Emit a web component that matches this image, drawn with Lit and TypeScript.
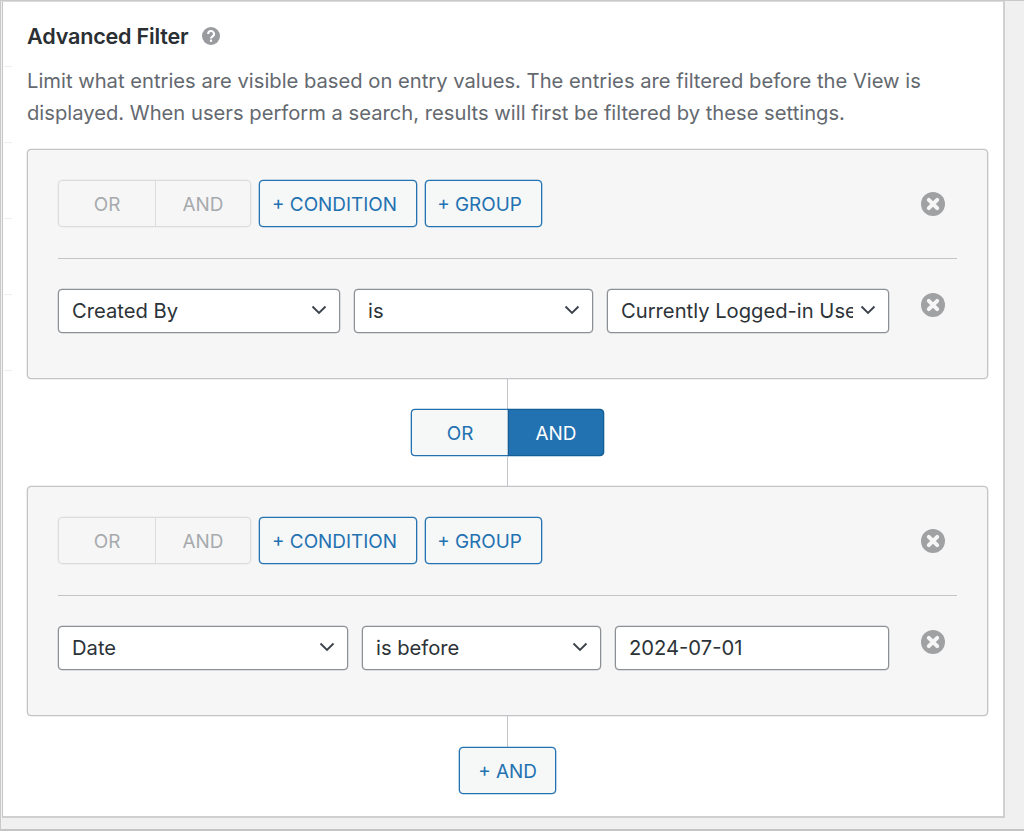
import { LitElement, html, css } from "lit";
import { customElement } from "lit/decorators.js";

const closeIcon = html`<svg class="x" viewBox="0 0 24 24" width="24" height="24" aria-hidden="true">
  <circle cx="12" cy="12" r="12" fill="#a0a1a3"></circle>
  <path d="M7.8 7.8 16.2 16.2M16.2 7.8 7.8 16.2" stroke="#f6f6f7" stroke-width="4" stroke-linecap="round"></path>
</svg>`;

const chevron = html`<svg class="chev" viewBox="0 0 16 10" width="16" height="10" aria-hidden="true">
  <path d="M1.5 1.5 8 8 14.5 1.5" fill="none" stroke="#3c434a" stroke-width="1.9"></path>
</svg>`;

@customElement("app-root")
export class AppRoot extends LitElement {
  static styles = css`
    :host {
      display: block;
      width: 1024px;
      height: 831px;
      box-sizing: border-box;
      background: #f0f0f1;
      border-top: 1px solid #c9c9c9;
      border-left: 1px solid #c9c9c9;
      border-bottom: 2px solid #c4c4c4;
      font-family: Inter, "Liberation Sans", sans-serif;
      color: #2c3338;
      overflow: hidden;
      position: relative;
    }
    .panel {
      box-sizing: border-box;
      width: 1003px;
      height: 817px;
      margin-left: 1px;
      padding: 1px 16px 0 24px;
      background: #fff;
      border-left: 1px solid #c6c6c6;
      border-right: 2px solid #d0d0d0;
      border-bottom: 2px solid #cfcfcf;
      border-top: 1px solid #dcdcdc;
    }
    .tick {
      position: absolute;
      left: 3px;
      width: 8px;
      height: 1px;
      background: #eeeeee;
    }
    .title {
      display: flex;
      align-items: center;
      gap: 14px;
      height: 30px;
      margin-top: 18px;
      font-size: 21.6px;
      font-weight: 600;
      letter-spacing: -0.2px;
      color: #2a2f33;
    }
    .help { margin-top: -1px; }
    .desc {
      margin: 14px 0 0;
      font-size: 20.2px;
      line-height: 32px;
      color: #646970;
      white-space: nowrap;
    }
    .group {
      box-sizing: border-box;
      width: 961px;
      height: 230px;
      margin-top: 20px;
      padding: 30px 30px 0;
      background: #f6f6f7;
      border: 1px solid #c3c4c7;
      box-shadow: 0 0 0 0.3px #c3c4c7;
      border-radius: 4px;
    }
    .group.second { height: 230px; margin-top: 0; }
    .bar {
      display: flex;
      align-items: center;
      height: 47px;
      gap: 8px;
      padding-bottom: 31px;
      border-bottom: 1px solid #c3c4c7;
      position: relative;
    }
    .btn {
      box-sizing: border-box;
      display: flex;
      align-items: center;
      justify-content: center;
      height: 47px;
      padding-top: 1px;
      font-size: 18.9px;
      color: #2271b1;
      background: #f6f7f7;
      border: 1px solid #2271b1;
      box-shadow: 0 0 0 0.3px #2271b1;
      border-radius: 4px;
      white-space: nowrap;
    }
    .seg {
      display: flex;
      height: 47px;
      width: 193px;
      box-sizing: border-box;
      border: 1px solid #dcdcde;
      box-shadow: 0 0 0 0.3px #dcdcde;
      border-radius: 4px;
    }
    .seg div {
      flex: 1;
      display: flex;
      align-items: center;
      justify-content: center;
      padding-top: 1px;
      font-size: 18.9px;
      color: #a7aaad;
    }
    .seg div:first-child { flex: 0 0 96px; }
    .seg div + div { border-left: 1px solid #dcdcde; }
    .cond { width: 158px; padding-right: 7px; }
    .grp { width: 117px; padding-right: 8px; }
    .x { display: block; flex: none; }
    .bar .x { position: absolute; right: 12px; top: 12px; }
    .row {
      display: flex;
      gap: 14px;
      margin-top: 30px;
      position: relative;
      width: 831px;
    }
    .row .x { position: absolute; left: 863px; top: 4px; }
    .field {
      box-sizing: border-box;
      display: flex;
      align-items: center;
      justify-content: space-between;
      height: 44px;
      padding: 0 12px 2px 13px;
      background: #fff;
      border: 1px solid #8c8f94;
      box-shadow: 0 0 0 0.25px #8c8f94;
      border-radius: 4px;
      font-size: 20.2px;
      color: #2c3338;
      white-space: nowrap;
    }
    .field span { overflow: hidden; }
    .field.clip span { width: 232px; flex: none; }
    .w282 { width: 282px; }
    .w239 { width: 239px; }
    .w290 { width: 290px; }
    .w274 { width: 274px; }
    .link {
      width: 961px;
      display: flex;
      flex-direction: column;
      align-items: center;
    }
    .line { width: 1.5px; background: #c3c4c7; }
    .l30 { height: 30px; }
    .l31 { height: 31px; }
    .toggle {
      display: flex;
      width: 193px;
      height: 47px;
      box-sizing: border-box;
    }
    .toggle .or { flex: 0 0 97px; border-radius: 4px 0 0 4px; border-right: 0; }
    .toggle .and {
      flex: 0 0 96px;
      border-radius: 0 4px 4px 0;
      background: #2271b1;
      border-color: #135e96;
      box-shadow: 0 0 0 0.3px #135e96;
      color: #fff;
    }
    .add { width: 97px; }
  `;

  render() {
    return html`
      ${[65, 141, 217, 293, 369].map((t) => html`<i class="tick" style="top:${t}px"></i>`)}
      <div class="panel">
        <div class="title">
          Advanced Filter
          <svg class="help" viewBox="0 0 18 18" width="18" height="18" aria-hidden="true">
            <circle cx="9" cy="9" r="9" fill="#9a9b9e"></circle>
            <path d="M6.2 7a2.9 2.9 0 1 1 4.4 2.4c-1 .7-1.6 1-1.6 2.2" fill="none" stroke="#fff" stroke-width="2.1"></path>
            <rect x="7.9" y="12.6" width="2.2" height="2.2" fill="#fff"></rect>
          </svg>
        </div>
        <p class="desc">Limit what entries are visible based on entry values. The entries are filtered before the View is<br />displayed. When users perform a search, results will first be filtered by these settings.</p>

        <div class="group">
          ${this.bar()}
          <div class="row">
            <div class="field w282"><span>Created By</span>${chevron}</div>
            <div class="field w239"><span>is</span>${chevron}</div>
            <div class="field w282 clip"><span>Currently Logged-in User</span>${chevron}</div>
            ${closeIcon}
          </div>
        </div>

        <div class="link">
          <div class="line l30"></div>
          <div class="toggle">
            <div class="btn or">OR</div>
            <div class="btn and">AND</div>
          </div>
          <div class="line l30"></div>
        </div>

        <div class="group second">
          ${this.bar()}
          <div class="row">
            <div class="field w290"><span>Date</span>${chevron}</div>
            <div class="field w239"><span>is before</span>${chevron}</div>
            <div class="field w274"><span>2024-07-01</span></div>
            ${closeIcon}
          </div>
        </div>

        <div class="link">
          <div class="line l31"></div>
          <div class="btn add">+ AND</div>
        </div>
      </div>
    `;
  }

  bar() {
    return html`<div class="bar">
      <div class="seg"><div>OR</div><div>AND</div></div>
      <div class="btn cond">+ CONDITION</div>
      <div class="btn grp">+ GROUP</div>
      ${closeIcon}
    </div>`;
  }
}
